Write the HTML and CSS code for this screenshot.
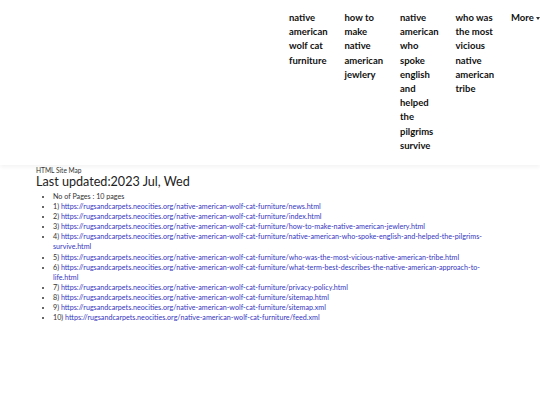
FILE: index.html
```html
<!DOCTYPE html>
<html lang="en">
<head>
  <meta charset="UTF-8">
  <title>HTML Site Map</title>
  <link rel="stylesheet" href="styles.css">
</head>
<body>
<header class="site-header">
  <nav class="menu">
    <ul>
      <li><a href="#">native american wolf cat furniture</a></li>
      <li><a href="#">how to make native american jewlery</a></li>
      <li><a href="#">native american who spoke english and helped the pilgrims survive</a></li>
      <li><a href="#">who was the most vicious native american tribe</a></li>
      <li class="more"><a href="#">More <span class="caret"></span></a></li>
    </ul>
  </nav>
</header>

<div class="content">
  <div class="small-title">HTML Site Map</div>
  <h1>Last updated:2023 Jul, Wed</h1>
  <ul class="pages">
    <li>No of Pages : 10 pages</li>
    <li>1) <a href="#">https://rugsandcarpets.neocities.org/native-american-wolf-cat-furniture/news.html</a></li>
    <li>2) <a href="#">https://rugsandcarpets.neocities.org/native-american-wolf-cat-furniture/index.html</a></li>
    <li>3) <a href="#">https://rugsandcarpets.neocities.org/native-american-wolf-cat-furniture/how-to-make-native-american-jewlery.html</a></li>
    <li>4) <a href="#">https://rugsandcarpets.neocities.org/native-american-wolf-cat-furniture/native-american-who-spoke-english-and-helped-the-pilgrims-survive.html</a></li>
    <li>5) <a href="#">https://rugsandcarpets.neocities.org/native-american-wolf-cat-furniture/who-was-the-most-vicious-native-american-tribe.html</a></li>
    <li>6) <a href="#">https://rugsandcarpets.neocities.org/native-american-wolf-cat-furniture/what-term-best-describes-the-native-american-approach-to-life.html</a></li>
    <li>7) <a href="#">https://rugsandcarpets.neocities.org/native-american-wolf-cat-furniture/privacy-policy.html</a></li>
    <li>8) <a href="#">https://rugsandcarpets.neocities.org/native-american-wolf-cat-furniture/sitemap.html</a></li>
    <li>9) <a href="#">https://rugsandcarpets.neocities.org/native-american-wolf-cat-furniture/sitemap.xml</a></li>
    <li>10) <a href="#">https://rugsandcarpets.neocities.org/native-american-wolf-cat-furniture/feed.xml</a></li>
  </ul>
</div>
</body>
</html>
```

FILE: styles.css
```css
body {
  margin: 0;
  padding: 0;
  background-color: #FFF;
  color: #222;
  font-family: Lato, "Liberation Sans", sans-serif;
}

a {
  text-decoration: none;
}

.site-header {
  height: 165px;
  background-color: #FFF;
  box-shadow: 0 2px 4px rgba(0, 0, 0, 0.05);
}

.menu {
  display: flex;
  justify-content: flex-end;
  padding-top: 11px;
}

.menu ul {
  display: flex;
  gap: 15.5px;
  margin: 0;
  padding: 0;
  list-style: none;
}

.menu li {
  width: 40px;
  font-size: 9.5px;
  font-weight: bold;
  line-height: 14.2px;
}

.menu li a {
  color: #111;
}

.menu .more {
  width: 29px;
  white-space: nowrap;
}

.caret {
  display: inline-block;
  width: 0;
  height: 0;
  vertical-align: middle;
  border-left: 2.5px solid transparent;
  border-right: 2.5px solid transparent;
  border-top: 3px solid #333;
}

.content {
  padding: 1px 36px 0;
}

.small-title {
  font-size: 6.6px;
  color: #333;
}

h1 {
  font-size: 12.6px;
  font-weight: normal;
  margin: 0 0 3px;
  color: #222;
}

.pages {
  margin: 0;
  padding-left: 17px;
  font-size: 7.17px;
  line-height: 10.1px;
  color: #333;
}

.pages li::marker {
  font-size: 6px;
}

.pages a {
  color: #3535C0;
}
```
